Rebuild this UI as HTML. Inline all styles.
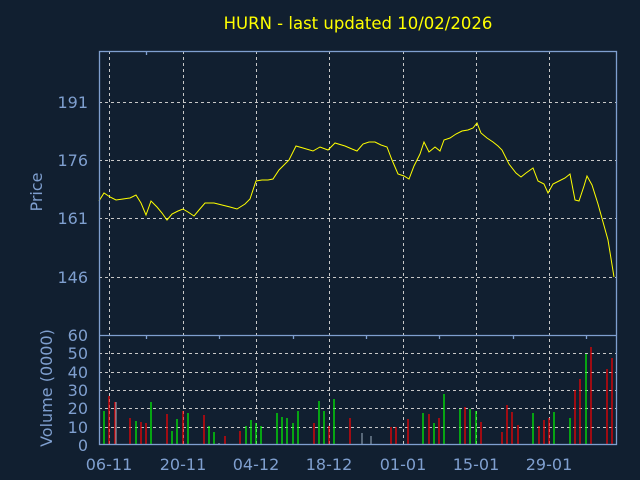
<!DOCTYPE html>
<html><head><style>html,body{margin:0;padding:0;background:#111f30;}svg{display:block}</style></head>
<body>
<svg width="640" height="480" xmlns="http://www.w3.org/2000/svg" font-family="DejaVu Sans, sans-serif">
<rect width="640" height="480" fill="#111f30"/>
<text x="358" y="29" fill="#ffff00" font-size="16.5" text-anchor="middle">HURN - last updated 10/02/2026</text>
<g stroke="#c8c8c8" stroke-width="1" stroke-dasharray="3,3" fill="none">
<line x1="99" y1="102.5" x2="617" y2="102.5"/><line x1="99" y1="160.5" x2="617" y2="160.5"/><line x1="99" y1="218.5" x2="617" y2="218.5"/><line x1="99" y1="277.5" x2="617" y2="277.5"/>
<line x1="99" y1="353.5" x2="617" y2="353.5"/><line x1="99" y1="372.5" x2="617" y2="372.5"/><line x1="99" y1="390.5" x2="617" y2="390.5"/><line x1="99" y1="408.5" x2="617" y2="408.5"/><line x1="99" y1="427.5" x2="617" y2="427.5"/>
<line x1="109.5" y1="51" x2="109.5" y2="445"/><line x1="183.5" y1="51" x2="183.5" y2="445"/><line x1="256.5" y1="51" x2="256.5" y2="445"/><line x1="329.5" y1="51" x2="329.5" y2="445"/><line x1="403.5" y1="51" x2="403.5" y2="445"/><line x1="476.5" y1="51" x2="476.5" y2="445"/><line x1="549.5" y1="51" x2="549.5" y2="445"/>
</g>
<g stroke-width="1.2">
<g stroke="#00ff00"><line x1="104" y1="445" x2="104" y2="411"/><line x1="136" y1="445" x2="136" y2="421"/><line x1="151" y1="445" x2="151" y2="402"/><line x1="172" y1="445" x2="172" y2="431"/><line x1="177" y1="445" x2="177" y2="419"/><line x1="188" y1="445" x2="188" y2="413"/><line x1="209" y1="445" x2="209" y2="426"/><line x1="214" y1="445" x2="214" y2="432"/><line x1="246" y1="445" x2="246" y2="426"/><line x1="251" y1="445" x2="251" y2="420"/><line x1="256" y1="445" x2="256" y2="423"/><line x1="261" y1="445" x2="261" y2="426"/><line x1="277" y1="445" x2="277" y2="413"/><line x1="282" y1="445" x2="282" y2="417"/><line x1="287" y1="445" x2="287" y2="418"/><line x1="293" y1="445" x2="293" y2="423"/><line x1="298" y1="445" x2="298" y2="411"/><line x1="319" y1="445" x2="319" y2="401"/><line x1="324" y1="445" x2="324" y2="411"/><line x1="334" y1="445" x2="334" y2="399"/><line x1="423" y1="445" x2="423" y2="413"/><line x1="434" y1="445" x2="434" y2="423"/><line x1="444" y1="445" x2="444" y2="394"/><line x1="460" y1="445" x2="460" y2="409"/><line x1="470" y1="445" x2="470" y2="409"/><line x1="476" y1="445" x2="476" y2="411"/><line x1="533" y1="445" x2="533" y2="413"/><line x1="554" y1="445" x2="554" y2="412"/><line x1="570" y1="445" x2="570" y2="418"/><line x1="586" y1="445" x2="586" y2="354"/></g>
<g stroke="#ff0000"><line x1="109" y1="445" x2="109" y2="396"/><line x1="115" y1="445" x2="115" y2="402"/><line x1="130" y1="445" x2="130" y2="418"/><line x1="141" y1="445" x2="141" y2="422"/><line x1="146" y1="445" x2="146" y2="423"/><line x1="167" y1="445" x2="167" y2="414"/><line x1="183" y1="445" x2="183" y2="411"/><line x1="204" y1="445" x2="204" y2="415"/><line x1="225" y1="445" x2="225" y2="436"/><line x1="240" y1="445" x2="240" y2="431"/><line x1="314" y1="445" x2="314" y2="423"/><line x1="329" y1="445" x2="329" y2="426"/><line x1="350" y1="445" x2="350" y2="418"/><line x1="391" y1="445" x2="391" y2="427"/><line x1="396" y1="445" x2="396" y2="427"/><line x1="408" y1="445" x2="408" y2="419"/><line x1="429" y1="445" x2="429" y2="414"/><line x1="439" y1="445" x2="439" y2="418"/><line x1="465" y1="445" x2="465" y2="407"/><line x1="481" y1="445" x2="481" y2="422"/><line x1="502" y1="445" x2="502" y2="432"/><line x1="507" y1="445" x2="507" y2="405"/><line x1="512" y1="445" x2="512" y2="412"/><line x1="518" y1="445" x2="518" y2="425"/><line x1="539" y1="445" x2="539" y2="426"/><line x1="544" y1="445" x2="544" y2="420"/><line x1="549" y1="445" x2="549" y2="418"/><line x1="575" y1="445" x2="575" y2="390"/><line x1="580" y1="445" x2="580" y2="379"/><line x1="591" y1="445" x2="591" y2="347"/><line x1="607" y1="445" x2="607" y2="369"/><line x1="612" y1="445" x2="612" y2="358"/></g>
<g stroke="#8899aa"><line x1="116" y1="445" x2="116" y2="402"/><line x1="219" y1="445" x2="219" y2="443"/><line x1="362" y1="445" x2="362" y2="433"/><line x1="371" y1="445" x2="371" y2="436"/></g>
</g>
<polyline fill="none" stroke="#ffff00" stroke-width="1" points="99,201 104,193 110,197 116,200 123,199 130,198 136,195 141,203 146,215 151,201 157,207 162,213 167,220 172,214 178,211 183,209 188,212 194,216 199,210 205,203 214,203 222,205 230,207 237,209 245,204 250,199 256,181 262,180 268,180 273,179 279,170 289,160 296,146 303,148 313,151 320,147 328,150 335,143 345,146 352,149 357,151 363,144 369,142 375,142 381,145 387,147 392,160 398,174 404,176 409,179 414,166 420,154 424,142 429,152 435,147 440,151 444,140 450,138 456,134 462,131 468,130 473,128 477,123 481,133 487,138 493,142 498,146 502,150 509,164 516,173 521,177 526,173 533,168 538,181 544,184 548,193 553,184 559,181 565,178 570,174 575,200 579,201 584,186 587,176 592,185 598,204 603,222 608,240 614,277"/>
<g stroke="#7f9fcf" stroke-width="1.3" fill="none">
<rect x="99.5" y="51.5" width="517" height="393"/>
<line x1="99" y1="335.5" x2="617" y2="335.5"/>
<line x1="146.5" y1="335" x2="146.5" y2="339"/><line x1="219.5" y1="335" x2="219.5" y2="339"/><line x1="293.5" y1="335" x2="293.5" y2="339"/><line x1="366.5" y1="335" x2="366.5" y2="339"/><line x1="439.5" y1="335" x2="439.5" y2="339"/><line x1="513.5" y1="335" x2="513.5" y2="339"/><line x1="586.5" y1="335" x2="586.5" y2="339"/>
<line x1="146.5" y1="51" x2="146.5" y2="55"/>
</g>
<g fill="#7f9fcf" font-size="16">
<g text-anchor="end"><text x="88" y="108">191</text><text x="88" y="166">176</text><text x="88" y="224">161</text><text x="88" y="283">146</text>
<text x="88" y="341">60</text><text x="88" y="359">50</text><text x="88" y="378">40</text><text x="88" y="396">30</text><text x="88" y="414">20</text><text x="88" y="433">10</text><text x="88" y="451">0</text></g>
<g text-anchor="middle"><text x="109" y="470">06-11</text><text x="183" y="470">20-11</text><text x="256" y="470">04-12</text><text x="329" y="470">18-12</text><text x="403" y="470">01-01</text><text x="476" y="470">15-01</text><text x="549" y="470">29-01</text></g>
<text transform="translate(42,192) rotate(-90)" text-anchor="middle">Price</text>
<text transform="translate(52,388) rotate(-90)" text-anchor="middle">Volume (0000)</text>
</g>
</svg>
</body></html>
